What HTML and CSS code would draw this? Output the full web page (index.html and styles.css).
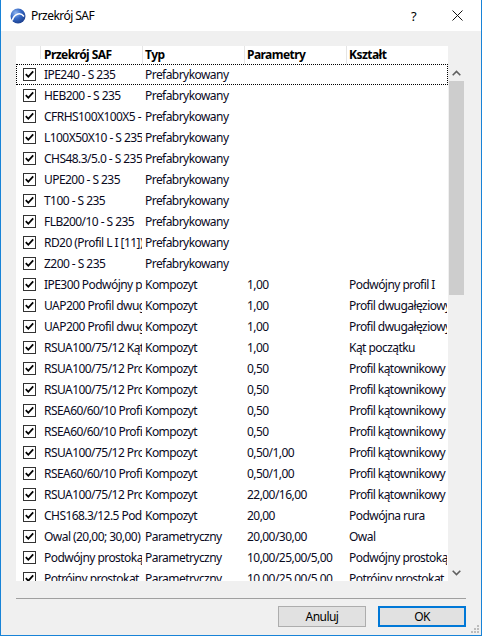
FILE: index.html
```html
<!DOCTYPE html>
<html lang="pl">
<head>
  <meta charset="UTF-8">
  <meta name="viewport" content="width=device-width, initial-scale=1.0">
  <title>Przekrój SAF</title>
  <link rel="stylesheet" href="styles.css">
</head>
<body>
  <div class="window">
    <div class="titlebar">
      <svg class="app-icon" width="16" height="16" viewBox="0 0 16 16">
        <defs>
          <radialGradient id="ball" cx="35%" cy="30%" r="75%">
            <stop offset="0" stop-color="#8fb4ee"/>
            <stop offset="0.5" stop-color="#3467c4"/>
            <stop offset="1" stop-color="#1c3f8c"/>
          </radialGradient>
        </defs>
        <circle cx="8" cy="8" r="7.5" fill="url(#ball)"/>
        <path d="M2.2 12.5 C4 6 10 3.5 14 8.5" fill="none" stroke="#fff" stroke-width="1.6"/>
      </svg>
      <span class="title">Przekrój SAF</span>
      <span class="help">?</span>
      <svg class="close" width="11" height="11" viewBox="0 0 11 11">
        <path d="M0.5 0.5 L10.5 10.5 M10.5 0.5 L0.5 10.5" stroke="#111" stroke-width="1"/>
      </svg>
    </div>

    <div class="content">
      <div class="list">
        <div class="list-main">
          <div class="row header">
            <div class="cell check-col"></div>
            <div class="cell">Przekrój SAF</div>
            <div class="cell">Typ</div>
            <div class="cell">Parametry</div>
            <div class="cell last">Kształt</div>
          </div>

          <div class="rows">
            <div class="row focused"><div class="cell check-col"><span class="checkbox"></span></div><div class="cell">IPE240 - S 235</div><div class="cell">Prefabrykowany</div><div class="cell"></div><div class="cell"></div></div>
            <div class="row"><div class="cell check-col"><span class="checkbox"></span></div><div class="cell">HEB200 - S 235</div><div class="cell">Prefabrykowany</div><div class="cell"></div><div class="cell"></div></div>
            <div class="row"><div class="cell check-col"><span class="checkbox"></span></div><div class="cell">CFRHS100X100X5 - S 235</div><div class="cell">Prefabrykowany</div><div class="cell"></div><div class="cell"></div></div>
            <div class="row"><div class="cell check-col"><span class="checkbox"></span></div><div class="cell">L100X50X10 - S 235</div><div class="cell">Prefabrykowany</div><div class="cell"></div><div class="cell"></div></div>
            <div class="row"><div class="cell check-col"><span class="checkbox"></span></div><div class="cell">CHS48.3/5.0 - S 235</div><div class="cell">Prefabrykowany</div><div class="cell"></div><div class="cell"></div></div>
            <div class="row"><div class="cell check-col"><span class="checkbox"></span></div><div class="cell">UPE200 - S 235</div><div class="cell">Prefabrykowany</div><div class="cell"></div><div class="cell"></div></div>
            <div class="row"><div class="cell check-col"><span class="checkbox"></span></div><div class="cell">T100 - S 235</div><div class="cell">Prefabrykowany</div><div class="cell"></div><div class="cell"></div></div>
            <div class="row"><div class="cell check-col"><span class="checkbox"></span></div><div class="cell">FLB200/10 - S 235</div><div class="cell">Prefabrykowany</div><div class="cell"></div><div class="cell"></div></div>
            <div class="row"><div class="cell check-col"><span class="checkbox"></span></div><div class="cell">RD20 (Profil L I [11])</div><div class="cell">Prefabrykowany</div><div class="cell"></div><div class="cell"></div></div>
            <div class="row"><div class="cell check-col"><span class="checkbox"></span></div><div class="cell">Z200 - S 235</div><div class="cell">Prefabrykowany</div><div class="cell"></div><div class="cell"></div></div>
            <div class="row"><div class="cell check-col"><span class="checkbox"></span></div><div class="cell">IPE300 Podwójny profil I</div><div class="cell">Kompozyt</div><div class="cell">1,00</div><div class="cell">Podwójny profil I</div></div>
            <div class="row"><div class="cell check-col"><span class="checkbox"></span></div><div class="cell">UAP200 Profil dwugałęziowy</div><div class="cell">Kompozyt</div><div class="cell">1,00</div><div class="cell">Profil dwugałęziowy</div></div>
            <div class="row"><div class="cell check-col"><span class="checkbox"></span></div><div class="cell">UAP200 Profil dwugałęziowy</div><div class="cell">Kompozyt</div><div class="cell">1,00</div><div class="cell">Profil dwugałęziowy</div></div>
            <div class="row"><div class="cell check-col"><span class="checkbox"></span></div><div class="cell">RSUA100/75/12 Kąt początku</div><div class="cell">Kompozyt</div><div class="cell">1,00</div><div class="cell">Kąt początku</div></div>
            <div class="row"><div class="cell check-col"><span class="checkbox"></span></div><div class="cell">RSUA100/75/12 Profil kątownikowy</div><div class="cell">Kompozyt</div><div class="cell">0,50</div><div class="cell">Profil kątownikowy</div></div>
            <div class="row"><div class="cell check-col"><span class="checkbox"></span></div><div class="cell">RSUA100/75/12 Profil kątownikowy</div><div class="cell">Kompozyt</div><div class="cell">0,50</div><div class="cell">Profil kątownikowy</div></div>
            <div class="row"><div class="cell check-col"><span class="checkbox"></span></div><div class="cell">RSEA60/60/10 Profil kątownikowy</div><div class="cell">Kompozyt</div><div class="cell">0,50</div><div class="cell">Profil kątownikowy</div></div>
            <div class="row"><div class="cell check-col"><span class="checkbox"></span></div><div class="cell">RSEA60/60/10 Profil kątownikowy</div><div class="cell">Kompozyt</div><div class="cell">0,50</div><div class="cell">Profil kątownikowy</div></div>
            <div class="row"><div class="cell check-col"><span class="checkbox"></span></div><div class="cell">RSUA100/75/12 Profil kątownikowy</div><div class="cell">Kompozyt</div><div class="cell">0,50/1,00</div><div class="cell">Profil kątownikowy</div></div>
            <div class="row"><div class="cell check-col"><span class="checkbox"></span></div><div class="cell">RSEA60/60/10 Profil kątownikowy</div><div class="cell">Kompozyt</div><div class="cell">0,50/1,00</div><div class="cell">Profil kątownikowy</div></div>
            <div class="row"><div class="cell check-col"><span class="checkbox"></span></div><div class="cell">RSUA100/75/12 Profil kątownikowy</div><div class="cell">Kompozyt</div><div class="cell">22,00/16,00</div><div class="cell">Profil kątownikowy</div></div>
            <div class="row"><div class="cell check-col"><span class="checkbox"></span></div><div class="cell">CHS168.3/12.5 Podwójna rura</div><div class="cell">Kompozyt</div><div class="cell">20,00</div><div class="cell">Podwójna rura</div></div>
            <div class="row"><div class="cell check-col"><span class="checkbox"></span></div><div class="cell">Owal (20,00; 30,00)</div><div class="cell">Parametryczny</div><div class="cell">20,00/30,00</div><div class="cell">Owal</div></div>
            <div class="row"><div class="cell check-col"><span class="checkbox"></span></div><div class="cell">Podwójny prostokąt</div><div class="cell">Parametryczny</div><div class="cell">10,00/25,00/5,00</div><div class="cell">Podwójny prostokąt</div></div>
            <div class="row"><div class="cell check-col"><span class="checkbox"></span></div><div class="cell">Potrójny prostokąt</div><div class="cell">Parametryczny</div><div class="cell">10,00/25,00/5,00</div><div class="cell">Potrójny prostokąt</div></div>
          </div>
        </div>

        <div class="scrollbar">
          <div class="scroll-btn">
            <svg width="9" height="6" viewBox="0 0 9 6"><path d="M0.7 5.3 L4.5 1.5 L8.3 5.3" fill="none" stroke="#606060" stroke-width="1.6"/></svg>
          </div>
          <div class="scroll-track">
            <div class="thumb"></div>
          </div>
          <div class="scroll-btn">
            <svg width="9" height="6" viewBox="0 0 9 6"><path d="M0.7 0.7 L4.5 4.5 L8.3 0.7" fill="none" stroke="#606060" stroke-width="1.6"/></svg>
          </div>
        </div>
      </div>

      <div class="separator"></div>

      <div class="buttons">
        <button class="btn">Anuluj</button>
        <button class="btn default">OK</button>
      </div>

      <svg class="grip" width="8" height="8" viewBox="0 0 8 8">
        <rect x="6" y="0" width="2" height="2" fill="#bcbcbc"/>
        <rect x="3" y="3" width="2" height="2" fill="#bcbcbc"/>
        <rect x="6" y="3" width="2" height="2" fill="#bcbcbc"/>
        <rect x="0" y="6" width="2" height="2" fill="#bcbcbc"/>
        <rect x="3" y="6" width="2" height="2" fill="#bcbcbc"/>
        <rect x="6" y="6" width="2" height="2" fill="#bcbcbc"/>
      </svg>
    </div>
  </div>
</body>
</html>
```

FILE: styles.css
```css
body {
  margin: 0;
  padding: 0;
  font-family: "Noto Sans", "Open Sans", sans-serif;
  font-size: 12px;
  letter-spacing: -0.55px;
  color: #000;
  background: #fff;
}

.window {
  width: 480px;
  height: 635px;
  border: 1px solid #1883d7;
  border-top: none;
  display: flex;
  flex-direction: column;
  background: #f0f0f0;
}

/* title bar */
.titlebar {
  height: 31px;
  background: #fff;
  display: flex;
  align-items: center;
  position: relative;
}

.app-icon {
  margin-left: 9px;
}

.title {
  margin-left: 5px;
  font-size: 12px;
  color: #000;
}

.help {
  margin-left: auto;
  font-size: 13px;
  margin-right: 36px;
}

.close {
  margin-right: 18px;
}

/* body of the dialog */
.content {
  flex: 1;
  padding: 15px 15px 0 15px;
  position: relative;
  display: flex;
  flex-direction: column;
}

.list {
  display: flex;
  height: 535px;
}

.list-main {
  width: 432px;
  background: #fff;
  display: flex;
  flex-direction: column;
  overflow: hidden;
}

.row {
  display: grid;
  grid-template-columns: 25px 102px 102px 102px 101px;
  height: 21px;
  align-items: center;
  position: relative;
}

.cell {
  white-space: nowrap;
  overflow: hidden;
  padding-left: 2px;
  margin-right: 1px;
  color: #0a0a1e;
}

.cell:nth-child(2) {
  padding-left: 3px;
}

.header {
  height: 18px;
  align-items: stretch;
  flex-shrink: 0;
}

.header .cell {
  font-weight: 700;
  color: #000;
  margin-right: 0;
  border-right: 1px solid #e5e5e5;
  line-height: 17px;
}

.header .cell.last {
  border-right: none;
}

.rows {
  flex: 1;
  overflow: hidden;
}

.focused::after {
  content: "";
  position: absolute;
  left: 0;
  top: 0;
  right: 0;
  bottom: 0;
  border: 1px dotted #000;
}

.check-col {
  padding-left: 7px;
  height: 13px;
}

.checkbox {
  display: block;
  width: 11px;
  height: 11px;
  border: 1px solid #333;
  background: #fff url("data:image/svg+xml,%3Csvg xmlns='http://www.w3.org/2000/svg' width='11' height='11' viewBox='0 0 11 11'%3E%3Cpath d='M1.8 5.2 L4.3 7.8 L9.2 2.4' fill='none' stroke='%23000' stroke-width='1.8'/%3E%3C/svg%3E") no-repeat center;
}

/* scrollbar */
.scrollbar {
  width: 17px;
  margin-top: 18px;
  display: flex;
  flex-direction: column;
}

.scroll-btn {
  height: 17px;
  display: flex;
  align-items: center;
  justify-content: center;
}

.scroll-track {
  flex: 1;
  padding: 0 1px;
}

.thumb {
  height: 214px;
  background: #cdcdcd;
}

.separator {
  height: 1px;
  background: #a0a0a0;
  margin-top: 17px;
}

.buttons {
  display: flex;
  justify-content: flex-end;
  gap: 12px;
  margin-top: 7px;
}

.btn {
  width: 88px;
  height: 21px;
  font-family: "Noto Sans", "Open Sans", sans-serif;
  font-size: 12px;
  letter-spacing: -0.55px;
  background: #e1e1e1;
  border: 1px solid #adadad;
  padding: 0;
  color: #000;
}

.btn.default {
  border: 2px solid #0078d7;
}

.grip {
  position: absolute;
  right: 2px;
  bottom: 2px;
}
```
